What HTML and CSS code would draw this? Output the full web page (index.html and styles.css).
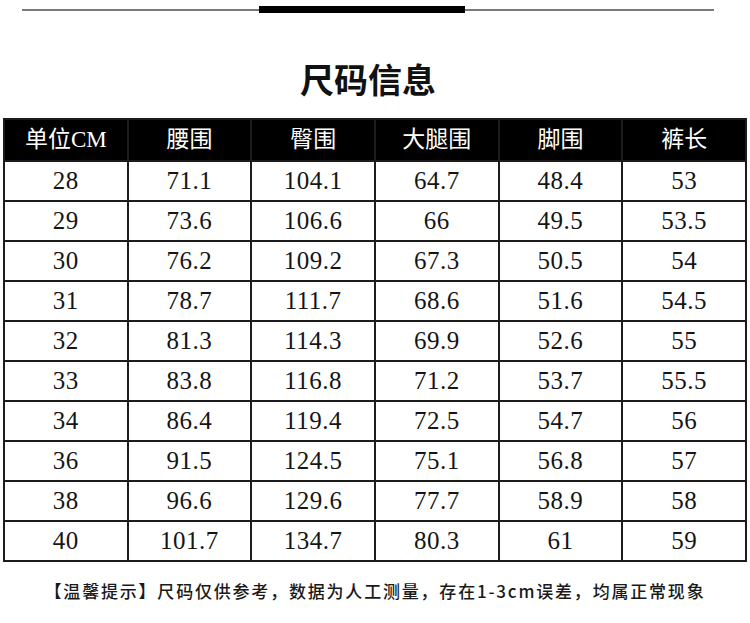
FILE: index.html
```html
<!DOCTYPE html>
<html lang="zh">
<head>
<meta charset="utf-8">
<title>尺码信息</title>
<link rel="stylesheet" href="styles.css">
</head>
<body>
<div class="topbar">
  <div class="thin thin-left"></div>
  <div class="thick"></div>
  <div class="thin thin-right"></div>
</div>
<h1 class="title">尺码信息</h1>
<table class="size-table">
  <thead>
    <tr><th>单位CM</th><th>腰围</th><th>臀围</th><th>大腿围</th><th>脚围</th><th>裤长</th></tr>
  </thead>
  <tbody>
    <tr><td>28</td><td>71.1</td><td>104.1</td><td>64.7</td><td>48.4</td><td>53</td></tr>
    <tr><td>29</td><td>73.6</td><td>106.6</td><td>66</td><td>49.5</td><td>53.5</td></tr>
    <tr><td>30</td><td>76.2</td><td>109.2</td><td>67.3</td><td>50.5</td><td>54</td></tr>
    <tr><td>31</td><td>78.7</td><td>111.7</td><td>68.6</td><td>51.6</td><td>54.5</td></tr>
    <tr><td>32</td><td>81.3</td><td>114.3</td><td>69.9</td><td>52.6</td><td>55</td></tr>
    <tr><td>33</td><td>83.8</td><td>116.8</td><td>71.2</td><td>53.7</td><td>55.5</td></tr>
    <tr><td>34</td><td>86.4</td><td>119.4</td><td>72.5</td><td>54.7</td><td>56</td></tr>
    <tr><td>36</td><td>91.5</td><td>124.5</td><td>75.1</td><td>56.8</td><td>57</td></tr>
    <tr><td>38</td><td>96.6</td><td>129.6</td><td>77.7</td><td>58.9</td><td>58</td></tr>
    <tr><td>40</td><td>101.7</td><td>134.7</td><td>80.3</td><td>61</td><td>59</td></tr>
  </tbody>
</table>
<p class="note">【温馨提示】尺码仅供参考，数据为人工测量，存在1-3cm误差，均属正常现象</p>
</body>
</html>
```
FILE: styles.css
```css
html, body {
  margin: 0;
  padding: 0;
  background: #fff;
}
body {
  width: 750px;
  height: 623px;
  overflow: hidden;
  font-family: "Noto Sans CJK SC", sans-serif;
  color: #111;
}
.topbar {
  display: flex;
  align-items: center;
  margin: 0 0 0 22px;
  padding-top: 6px;
}
.thin {
  height: 2px;
  background: #7a7a7a;
}
.thin-left {
  width: 237px;
}
.thin-right {
  width: 249px;
}
.thick {
  width: 206px;
  height: 7px;
  background: #000;
}
.title {
  margin: 46px 0 0 0;
  padding-right: 14px;
  text-align: center;
  font-family: "Noto Sans CJK SC", sans-serif;
  font-weight: 700;
  font-size: 34px;
  line-height: 40px;
  color: #111;
}
.size-table {
  margin: 19px 0 0 3px;
  width: 744px;
  table-layout: fixed;
  border-collapse: collapse;
}
.size-table th,
.size-table td {
  border: 2px solid #1c1c1c;
  padding: 0;
  text-align: center;
  font-family: "Liberation Serif", "Noto Sans CJK SC", serif;
}
.size-table th {
  background: #000;
  color: #fff;
  font-weight: 400;
  font-size: 23px;
  height: 40px;
  line-height: 40px;
}
.size-table td {
  font-size: 25px;
  height: 38px;
  line-height: 38px;
  letter-spacing: 0.5px;
  color: #151515;
}
.note {
  margin: 17px 0 0 0;
  text-align: center;
  font-family: "Noto Sans CJK SC", sans-serif;
  font-weight: 500;
  font-size: 17px;
  line-height: 24px;
  letter-spacing: 1.8px;
  color: #1a1a1a;
}
```
